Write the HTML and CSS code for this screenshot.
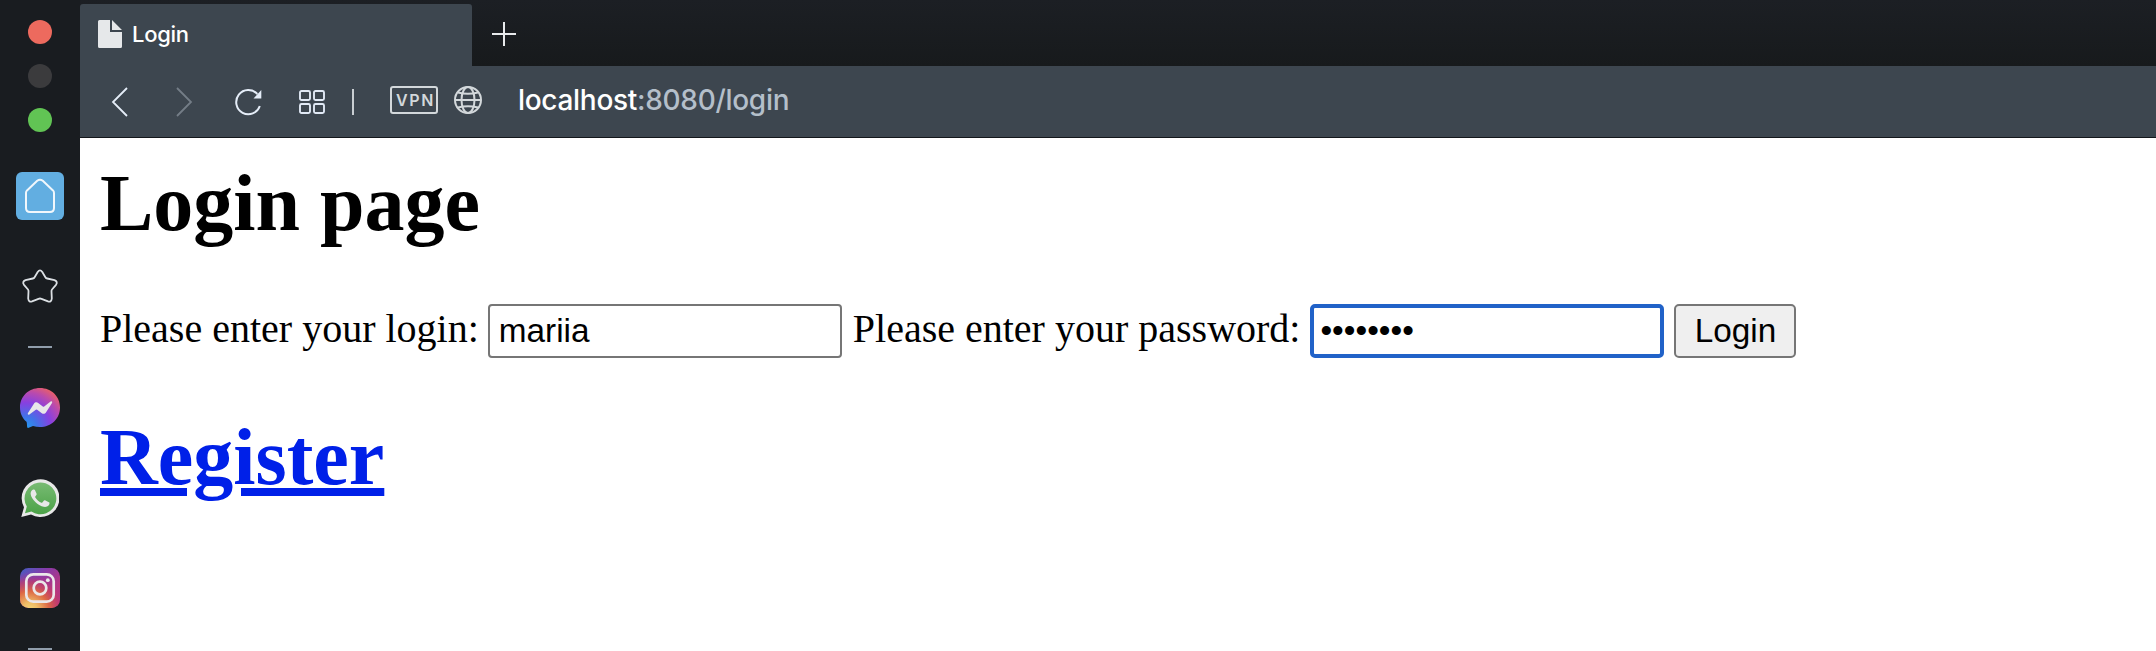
FILE: index.html
```html
<!DOCTYPE html>
<html lang="en">
<head>
<meta charset="utf-8">
<title>Login</title>
<link rel="stylesheet" href="styles.css">
</head>
<body>
<div class="window">
  <aside class="sidebar">
    <div class="lights">
      <span class="light red"></span>
      <span class="light grey"></span>
      <span class="light green"></span>
    </div>
    <div class="home">
      <svg width="48" height="48" viewBox="0 0 48 48" fill="none" stroke="#f1f7fc" stroke-width="2" stroke-linejoin="round"><path d="M21.200 8.800Q24 6.600 26.800 8.800L37 18.400Q38 19.400 38 21V36Q38 40 34 40H14Q10 40 10 36V21Q10 19.400 11 18.400Z"/></svg>
    </div>
    <svg class="star" width="40" height="40" viewBox="0 0 40 40" fill="none" stroke="#dce0e4" stroke-width="1.800" stroke-linejoin="round"><path d="M17.700 5Q20 1.600 22.300 5L25.400 10.200Q26 11.300 27.200 11.500L34.500 13.200Q38.200 14.800 36 17.800L32 22.500Q31.400 23.300 31.500 24.500L31.800 31.500Q31.400 35.400 28 34.400L21.500 31.800Q20 31.200 18.500 31.800L12 34.400Q8.600 35.400 8.200 31.500L8.500 24.500Q8.600 23.300 8 22.500L4 17.800Q1.800 14.800 5.500 13.200L12.800 11.500Q14 11.300 14.600 10.200Z"/></svg>
    <span class="rule"></span>
    <svg class="messenger" width="40" height="40" viewBox="0 0 40 40">
      <defs><radialGradient id="msg" cx=".15" cy="1" r="1.15"><stop offset="0" stop-color="#229bee"/><stop offset=".25" stop-color="#4272e8"/><stop offset=".55" stop-color="#8740e0"/><stop offset=".78" stop-color="#b94aae"/><stop offset="1" stop-color="#ef6260"/></radialGradient></defs>
      <path fill="url(#msg)" d="M20 0C8.700 0 0 8.300 0 19.400 0 25.300 2.400 30.200 6.500 33.800 7 34.300 7 38 7.200 39.300Q7.500 40.200 8.700 39.800L13 38.100C15.200 38.700 17.500 39 20 39 31.300 39 40 30.500 40 19.400S31.300 0 20 0Z"/>
      <path fill="#e8e8e9" d="M8 25.100L13.900 15.800C15 14.200 16.700 13.900 18.200 15L22.800 18.500Q23.500 19 24.200 18.500L30.600 13.600C31.700 12.800 32.700 13.800 32 15L26.100 24.300C25 25.900 23.300 26.300 21.800 25.200L17.200 21.700Q16.500 21.200 15.800 21.700L9.400 26.500C8.300 27.300 7.300 26.200 8 25.100Z"/>
    </svg>
    <svg class="whatsapp" width="38" height="38" viewBox="0 0 38 38">
      <defs><linearGradient id="wa" x1="0" y1="0" x2="0" y2="1"><stop offset="0" stop-color="#78bb73"/><stop offset="1" stop-color="#4ba247"/></linearGradient></defs>
      <path fill="#e8e8e8" d="M.3 38L3 28.200A18.900 18.900 0 1 1 10 35.400Z"/>
      <path fill="url(#wa)" d="M4 34.200L5.800 27.600A15.900 15.900 0 1 1 10.400 32.500Z"/>
      <path fill="#e8e8e8" d="M13.100 10.500C12.500 10.400 11.500 10.600 10.800 11.500 9.900 12.500 9.500 13.700 9.700 15.300 10 18 12 20.700 14.600 23.200 17.300 25.700 20 27.200 22.700 27.800 25.100 28.300 27.600 26.900 28.200 25.500 28.600 24.500 28.600 23.700 28.400 23.400L24 21.300Q23.400 21 23 21.500L21.300 23.600Q20.900 24 20.300 23.700C17.700 22.500 15.700 20.700 14.200 18.200Q14 17.800 14.300 17.400L15.500 15.800Q15.800 15.300 15.600 14.800L13.900 11Q13.600 10.500 13.100 10.500Z"/>
    </svg>
    <svg class="instagram" width="40" height="40" viewBox="0 0 40 40">
      <defs>
        <linearGradient id="ig" x1="0" y1="0" x2="1" y2="1"><stop offset="0" stop-color="#425fc4"/><stop offset=".35" stop-color="#873aa9"/><stop offset=".7" stop-color="#b6367f"/><stop offset="1" stop-color="#b3367f"/></linearGradient>
        <radialGradient id="igw" cx=".25" cy="1.050" r=".95"><stop offset="0" stop-color="#f4d778"/><stop offset=".2" stop-color="#efbd67"/><stop offset=".5" stop-color="#dc6744"/><stop offset=".75" stop-color="#c63c68" stop-opacity=".7"/><stop offset="1" stop-color="#a633a0" stop-opacity="0"/></radialGradient>
      </defs>
      <rect width="40" height="40" rx="8.500" fill="url(#ig)"/><rect width="40" height="40" rx="8.500" fill="url(#igw)"/>
      <g fill="none" stroke="#ebe7e9" stroke-width="2.700"><rect x="6.300" y="6.300" width="27.400" height="27.400" rx="7"/><circle cx="20" cy="20" r="6.300"/></g><circle cx="27.800" cy="12.200" r="1.900" fill="#ebe7e9"/>
    </svg>
    <span class="rule last"></span>
  </aside>
  <main class="browser">
    <header class="tabs">
      <div class="tab">
        <svg width="24" height="28" viewBox="0 0 24 28" fill="#e6e8ea"><path d="M1.500 0H12V12H24V26.500Q24 28 22.500 28H1.500Q0 28 0 26.500V1.500Q0 0 1.500 0ZM14 0L24 10H14Z"/></svg>
        <span class="tab-title">Login</span>
      </div>
      <div class="strip">
        <svg width="24" height="24" viewBox="0 0 24 24" stroke="#e8eaec" stroke-width="2"><path d="M12 0V24M0 12H24"/></svg>
      </div>
    </header>
    <nav class="toolbar">
      <svg class="back" width="18" height="30" viewBox="0 0 18 30" fill="none" stroke="#e5edf8" stroke-width="1.800"><path d="M16 1L2 15L16 29"/></svg>
      <svg class="forward" width="18" height="30" viewBox="0 0 18 30" fill="none" stroke="#747d87" stroke-width="1.800"><path d="M2 1L16 15L2 29"/></svg>
      <svg class="reload" width="28" height="28" viewBox="0 0 28 28"><path fill="none" stroke="#e5edf8" stroke-width="2" d="M24.800 18A12.100 12.100 0 1 1 22.300 6"/><path fill="#e5edf8" d="M26.300 2V10.500H18.500Z"/></svg>
      <svg class="grid" width="26" height="24" viewBox="0 0 26 24" fill="none" stroke="#e1e9f5" stroke-width="1.900"><rect x="1" y="1" width="10" height="9" rx="1.500"/><rect x="15" y="1" width="10" height="9" rx="1.500"/><rect x="1" y="14" width="10" height="9" rx="1.500"/><rect x="15" y="14" width="10" height="9" rx="1.500"/></svg>
      <span class="separator"></span>
      <span class="vpn">VPN</span>
      <svg class="globe" width="28" height="28" viewBox="0 0 28 28" fill="none" stroke="#d3d8db" stroke-width="2"><circle cx="14" cy="14" r="13"/><ellipse cx="14" cy="14" rx="6.500" ry="13"/><path d="M1 14H27M4 6.500Q14 9 24 6.500M4 21.500Q14 19 24 21.500"/></svg>
      <span class="url"><span class="host">localhost</span>:8080/login</span>
    </nav>
    <section class="page">
      <h1 class="heading">Login page</h1>
      <form class="form">
        <label for="login">Please enter your login:</label>
        <input class="field name" id="login" type="text" value="mariia">
        <label for="password">Please enter your password:</label>
        <input class="field focused" id="password" type="password" value="password">
        <button class="submit" type="button">Login</button>
      </form>
      <h1 class="heading"><a class="register" href="#">Register</a></h1>
    </section>
  </main>
</div>
</body>
</html>
```
FILE: styles.css
```css
* { box-sizing: border-box; }
body { margin: 0; overflow: hidden; background: #fff; }
.window { display: flex; height: 651px; overflow: hidden; }
svg { display: block; flex: none; }

.sidebar { width: 80px; flex: none; height: 651px; overflow: hidden; background: #191c20; display: flex; flex-direction: column; align-items: center; padding-top: 20px; }
.lights { display: flex; flex-direction: column; gap: 20px; }
.light { width: 24px; height: 24px; border-radius: 50%; }
.red { background: #ed6a5e; }
.grey { background: #3b3b3d; }
.green { background: #61c454; }
.home { margin-top: 40px; width: 48px; height: 48px; flex: none; border-radius: 6px; background: #62aee1; }
.star { margin-top: 47px; }
.rule { width: 24px; height: 2px; flex: none; margin-top: 39px; background: #909dab; }
.messenger { margin-top: 40px; }
.whatsapp { margin-top: 51px; }
.instagram { margin-top: 51px; }
.last { margin-top: 40px; }

.browser { flex: 1; min-width: 0; }
.tabs { display: flex; height: 66px; background: linear-gradient(#1c1f24, #171a1c); }
.tab { width: 392px; margin-top: 4px; border-radius: 3px 3px 0 0; background: #3d464f; display: flex; align-items: flex-start; padding: 16px 0 0 18px; color: #fff; }
.tab-title { margin-left: 10px; font: 500 22px/28px Inter, sans-serif; letter-spacing: -0.3px; }
.strip { padding: 22px 0 0 20px; }
.toolbar { height: 72px; background: #3d464f; border-bottom: 1px solid #14171b; display: flex; align-items: center; padding-left: 31px; }
.forward { margin-left: 46px; }
.reload { margin-left: 42px; }
.grid { margin-left: 36px; }
.separator { width: 2px; height: 26px; margin-left: 27px; background: #c9ced2; }
.vpn { width: 48px; height: 28px; margin: -4px 0 0 36px; border: 2px solid #d3d8db; border-radius: 3px; color: #d3d8db; font: 600 16px/24px Inter, sans-serif; letter-spacing: 1.6px; padding-left: 4px; }
.globe { margin: -4px 0 0 16px; }
.url { margin: -4px 0 0 36px; color: #b4bfca; font: 500 28px/34px Inter, sans-serif; letter-spacing: -0.3px; white-space: nowrap; }
.host { color: #fff; }

.page { padding: 20px 20px 0; font: 40px/46px "Liberation Serif", serif; color: #000; }
.heading { margin: 0; font-size: 80px; line-height: 90px; font-weight: bold; }
.form { display: flex; align-items: baseline; gap: 10px; margin: 56px 0 54px; white-space: nowrap; }
.field { width: 354px; height: 54px; border: 2px solid #767676; border-radius: 4px; padding: 0 9px; font: 33.33px "Liberation Sans", sans-serif; color: #000; background: #fff; outline: 0; }
.name { margin: 0 1px 0 -1px; }
.focused { border: 4px solid #2162c8; border-radius: 5px; padding: 0 6px; }
.submit { width: 122px; height: 54px; border: 2px solid #767676; border-radius: 5px; padding: 0; background: #efefef; font: 33.33px "Liberation Sans", sans-serif; color: #000; }
.register { color: #0020e8; text-decoration-thickness: 8px; text-underline-offset: 4px; }
```
